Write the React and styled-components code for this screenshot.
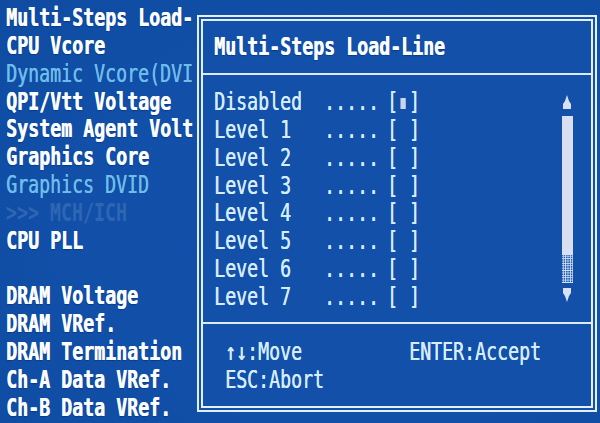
import React from "react";
import styled, { createGlobalStyle } from "styled-components";

const Global = createGlobalStyle`
  html, body { margin: 0; padding: 0; background: #114fa8; }
  #root { width: 600px; height: 423px; }
`;

const Screen = styled.div`
  position: relative;
  width: 600px;
  height: 423px;
  overflow: hidden;
  background: radial-gradient(ellipse at 60% 55%, #1252ad 0%, #114fa8 60%, #0f4ba1 100%);
  font-family: "DejaVu Sans Mono", "Liberation Mono", monospace;
`;

const Menu = styled.div`
  display: flex;
  flex-direction: column;
  padding: 5px 0 0 6px;
`;

const tones = {
  bright: "color:#fbfdff;font-weight:700;text-shadow:0.6px 0 0 #f4f9ff,0 1px 1px #0b3a86;",
  soft: "color:#6fbde9;font-weight:400;text-shadow:0.5px 0 0 #6fbde9;",
  faded: "color:#2f66b4;font-weight:700;",
  plain: "color:#d7ecff;font-weight:400;text-shadow:0.5px 0 0 #d7ecff;",
};

const Line = styled.div`
  height: 27.85px;
  line-height: 27.85px;
  font-size: 24px;
  white-space: pre;
  transform: scaleX(0.761);
  transform-origin: 0 50%;
  ${(p) => tones[p.$tone || "bright"]}
`;

const Dialog = styled.section`
  position: absolute;
  left: 197px;
  top: 15px;
  width: 392px;
  height: 389px;
  border: 2px solid #e4effc;
  padding: 2px;
  background: #1250aa;
`;

const Frame = styled.div`
  display: flex;
  flex-direction: column;
  height: 100%;
  box-sizing: border-box;
  border: 2px solid #e4effc;
`;

const Title = styled.header`
  height: 52px;
  box-sizing: border-box;
  padding: 13px 0 0 11px;
`;

const Divider = styled.hr`
  margin: 0;
  border: 0;
  height: 2px;
  background: #dcebfb;
`;

const Body = styled.div`
  display: flex;
  justify-content: space-between;
  height: 247px;
  box-sizing: border-box;
  padding: 14px 12px 0 11px;
`;

const Options = styled.div`
  display: flex;
  flex-direction: column;
  width: 240px;
`;

const Box = styled.span`
  margin-left: 10.5px;
`;

const Mark = styled.span`
  display: inline-block;
  width: 7px;
  height: 11px;
  margin: 0 3.7px;
  background: #c9d6ea;
  vertical-align: 1px;
`;

const Scroll = styled.div`
  display: flex;
  flex-direction: column;
  align-items: center;
  width: 12px;
  padding-top: 6px;
  margin-right: 6px;
`;

const Arrow = styled.svg`
  display: block;
  width: 10px;
  height: 14px;
`;

const Thumb = styled.div`
  width: 11px;
  height: 139px;
  margin-top: 7px;
  background: #d9def0;
`;

const Track = styled.div`
  width: 11px;
  height: 28px;
  margin-bottom: 5px;
  background-color: #1b5cb2;
  background-image: radial-gradient(circle, #d5dff0 0.9px, transparent 1px);
  background-size: 2.4px 2.4px;
`;

const Footer = styled.footer`
  display: grid;
  grid-template-columns: 184px 1fr;
  padding: 15px 0 0 22px;
`;

const items = [
  ["Multi-Steps Load-", "bright"],
  ["CPU Vcore", "bright"],
  ["Dynamic Vcore(DVI", "soft"],
  ["QPI/Vtt Voltage", "bright"],
  ["System Agent Volt", "bright"],
  ["Graphics Core", "bright"],
  ["Graphics DVID", "soft"],
  [">>> MCH/ICH", "faded"],
  ["CPU PLL", "bright"],
  [" ", "bright"],
  ["DRAM Voltage", "bright"],
  ["DRAM VRef.", "bright"],
  ["DRAM Termination", "bright"],
  ["Ch-A Data VRef.", "bright"],
  ["Ch-B Data VRef.", "bright"],
];

const levels = ["Disabled", "Level 1", "Level 2", "Level 3", "Level 4", "Level 5", "Level 6", "Level 7"];

export default function App() {
  return (
    <Screen>
      <Global />
      <Menu>
        {items.map(([text, tone], i) => (
          <Line key={i} $tone={tone}>{text}</Line>
        ))}
      </Menu>
      <Dialog>
        <Frame>
          <Title>
            <Line>Multi-Steps Load-Line</Line>
          </Title>
          <Divider />
          <Body>
            <Options>
              {levels.map((name, i) => (
                <Line key={name} $tone="plain">
                  {name.padEnd(10, " ")}.....<Box>[{i === 0 ? <Mark /> : " "}]</Box>
                </Line>
              ))}
            </Options>
            <Scroll>
              <Arrow viewBox="0 0 10 14">
                <path d="M5 0 L7 6 L9 9 L9 14 L1 14 L1 9 L3 6 Z" fill="#d9e2f2" />
              </Arrow>
              <Thumb />
              <Track />
              <Arrow viewBox="0 0 10 14">
                <path d="M1 0 L9 0 L9 5 L7 8 L5 14 L3 8 L1 5 Z" fill="#d9e2f2" />
              </Arrow>
            </Scroll>
          </Body>
          <Divider />
          <Footer>
            <Line $tone="plain">↑↓:Move</Line>
            <Line $tone="plain">ENTER:Accept</Line>
            <Line $tone="plain">ESC:Abort</Line>
          </Footer>
        </Frame>
      </Dialog>
    </Screen>
  );
}
